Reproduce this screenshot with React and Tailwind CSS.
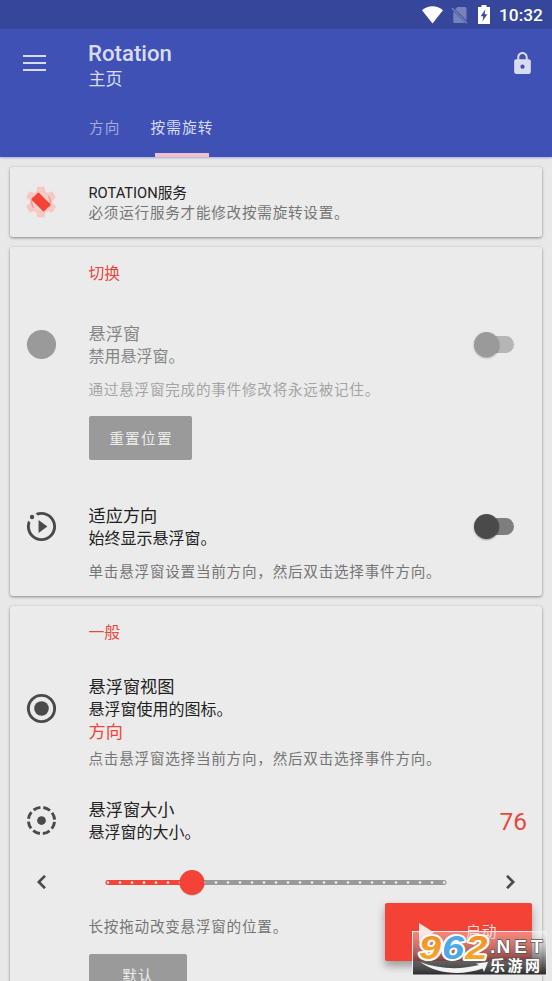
import React from "react";

const GEAR =
  "M19.14 12.94c.04-.3.06-.61.06-.94 0-.32-.02-.64-.07-.94l2.03-1.58c.18-.14.23-.41.12-.61l-1.92-3.32c-.12-.22-.37-.29-.59-.22l-2.39.96c-.5-.38-1.03-.7-1.62-.94l-.36-2.54c-.04-.24-.24-.41-.48-.41h-3.84c-.24 0-.43.17-.47.41l-.36 2.54c-.59.24-1.13.57-1.62.94l-2.39-.96c-.22-.08-.47 0-.59.22L2.74 8.87c-.12.21-.08.47.12.61l2.03 1.58c-.05.3-.09.63-.09.94s.02.64.07.94l-2.03 1.58c-.18.14-.23.41-.12.61l1.92 3.32c.12.22.37.29.59.22l2.39-.96c.5.38 1.03.7 1.62.94l.36 2.54c.05.24.24.41.48.41h3.84c.24 0 .44-.17.47-.41l.36-2.54c.59-.24 1.13-.56 1.62-.94l2.39.96c.22.08.47 0 .59-.22l1.92-3.32c.12-.22.07-.47-.12-.61l-2.01-1.58z";

function Line({ className = "", children }) {
  return <div className={"whitespace-nowrap " + className}>{children}</div>;
}
const Section = ({ children }) => (
  <Line className="h-6 pl-[78.5px] text-[15.8px] leading-6 text-[#e8483c]">{children}</Line>
);
const Title = ({ children }) => <Line className="h-[22px] text-[17.200px] leading-[22px]">{children}</Line>;
const Sub = ({ children }) => <Line className="h-[23px] text-[16px] leading-[23px]">{children}</Line>;
const Caption = ({ children }) => (
  <Line className="h-[22px] text-[14.6px] leading-[22px] tracking-[0.75px] text-[#757575]">{children}</Line>
);

function Card({ className = "", children }) {
  return (
    <section className={"mx-[10px] rounded-[3px] bg-[#ebebeb] shadow-[0_1px_3px_rgba(0,0,0,0.42)] " + className}>
      {children}
    </section>
  );
}

function IconCell({ className = "", children }) {
  return <div className={"flex w-[78.5px] shrink-0 pl-[14px] text-[#4a4a4a] " + className}>{children}</div>;
}

function Svg({ className = "size-[35px]", children }) {
  return (
    <svg viewBox="0 0 24 24" fill="currentColor" className={"block shrink-0 " + className}>
      {children}
    </svg>
  );
}

function Switch({ knob, track }) {
  return (
    <div className={"mr-[28px] flex h-[17px] w-[37px] items-center rounded-full " + track}>
      <div className={"-ml-[3px] size-[25px] shrink-0 rounded-full shadow-[0_1px_2px_rgba(0,0,0,0.35)] " + knob} />
    </div>
  );
}

function StatusBar() {
  return (
    <div className="flex h-[29px] items-center justify-end bg-[#36479b] pr-[10px] text-white">
      <svg viewBox="0 0 21 18" className="h-[18px] w-[21px]" fill="currentColor">
        <path d="M0 4.3C6-1.2 15-1.2 21 4.3L10.5 17.6Z" />
      </svg>
      <svg viewBox="0 0 17 18" className="ml-[8px] h-[18px] w-[17px] text-[#7782bb]">
        <path fill="currentColor" d="M6.5 1H14q1.5 0 1.5 1.500V14.500L4.200 3.200ZM2.300 5.300L14.300 17H3.800q-1.500 0-1.500-1.500Z" />
        <path stroke="currentColor" strokeWidth="1.300" d="M1 2L16 17.300" />
      </svg>
      <svg viewBox="0 0 12 19" className="ml-[10px] h-[19px] w-[12px]">
        <path fill="white" d="M3.500 0h5v2H12v17H0V2h3.500z" />
        <path fill="#36479b" d="M7.300 4.500L2.700 11.200H5.300L4.500 16.300L9.300 9.300H6.600Z" />
      </svg>
      <span className="ml-[9px] w-[43px] whitespace-nowrap text-[17.3px] font-medium leading-[30px]">10:32</span>
    </div>
  );
}

function Header() {
  return (
    <header className="relative z-10 h-[157px] bg-[#3f51b5] shadow-[0_1px_2px_rgba(63,81,181,0.4)]">
      <StatusBar />
      <div className="flex h-[128px] text-[#d9dcf0]">
        <div className="flex w-[88px] shrink-0 flex-col gap-[5px] pl-[23px] pt-[26px]">
          <i className="h-[2px] w-[23px] bg-[#d9dcf0]" />
          <i className="h-[2px] w-[23px] bg-[#d9dcf0]" />
          <i className="h-[2px] w-[23px] bg-[#d9dcf0]" />
        </div>
        <div className="flex flex-1 flex-col">
          <Line className="mt-[11px] h-[27px] text-[22.200px] font-medium leading-[27px]">Rotation</Line>
          <Line className="h-[24px] pl-[0.500px] text-[17px] leading-[25px]">主页</Line>
          <div className="mt-[22px] flex h-[44px] text-[14.700px] leading-[30px] tracking-[1.100px]">
            <span className="w-[62px] pl-px text-[#a4acdb]">方向</span>
            <div className="flex w-[66px] flex-col">
              <span className="h-[40px] whitespace-nowrap pl-[0.500px]">按需旋转</span>
              <i className="ml-[5px] h-[4px] w-[54px] bg-[#f1c0c8]" />
            </div>
          </div>
        </div>
        <Svg className="mr-[17px] mt-[22px] size-[25px]">
          <path d="M18 8h-1V6c0-2.760-2.240-5-5-5S7 3.240 7 6v2H6c-1.100 0-2 .9-2 2v10c0 1.100.9 2 2 2h12c1.100 0 2-.9 2-2V10c0-1.100-.9-2-2-2zm-6 9c-1.100 0-2-.9-2-2s.9-2 2-2 2 .9 2 2-.9 2-2 2zm3.100-9H8.900V6c0-1.710 1.390-3.100 3.100-3.100 1.710 0 3.100 1.390 3.100 3.100v2z" />
        </Svg>
      </div>
    </header>
  );
}

function Slider() {
  return (
    <svg viewBox="0 0 342 28" className="h-[28px] w-[342px]">
      <path d="M3 14.500H339" stroke="#999" strokeWidth="5" strokeLinecap="round" />
      <path d="M3 14.500H87" stroke="#f44336" strokeWidth="5" strokeLinecap="round" />
      {Array.from({ length: 29 }, (_, i) => (
        <circle key={i} cx={3 + i * 12} cy="14.500" r="1.300" fill="#f6eeee" />
      ))}
      <circle cx="87" cy="15" r="12.800" fill="#000" opacity="0.15" />
      <circle cx="87" cy="14.500" r="12.500" fill="#f44336" />
    </svg>
  );
}

function Watermark() {
  return (
    <svg viewBox="0 0 135 45" className="absolute left-[412px] top-[931px] h-[45px] w-[135px]">
      <defs>
        <linearGradient id="plate" x1="0" y1="0" x2="0" y2="1">
          <stop offset="0" stopColor="#fff" stopOpacity="0.35" />
          <stop offset="0.300" stopColor="#aaa" stopOpacity="0.45" />
          <stop offset="0.650" stopColor="#444" stopOpacity="0.650" />
          <stop offset="1" stopColor="#111" stopOpacity="0.900" />
        </linearGradient>
        <linearGradient id="amber" x1="0" y1="0" x2="0" y2="1">
          <stop offset="0" stopColor="#ef8a22" />
          <stop offset="1" stopColor="#fbab2c" />
        </linearGradient>
      </defs>
      <rect x="0.500" y="0.500" width="134" height="43.500" fill="url(#plate)" stroke="#eee" />
      <path d="M8 31C26 38 48 39 67 34L64 32.500L76 31L72 41L70.500 37.500C49 45 25 43 8 31Z" fill="#f3f3f3" />
      <g
        fontFamily="'Liberation Sans', Arial, sans-serif"
        fontWeight="700"
        stroke="#fff"
        strokeLinejoin="round"
        paintOrder="stroke"
      >
        <g fontSize="34" fontStyle="italic">
          <g strokeWidth="4">
            <text x="7" y="28" textLength="22" lengthAdjust="spacingAndGlyphs" fill="url(#amber)">9</text>
            <text x="30" y="28" textLength="22" lengthAdjust="spacingAndGlyphs" fill="#4ba9e8">6</text>
            <text x="53.500" y="28" textLength="22" lengthAdjust="spacingAndGlyphs" fill="url(#amber)">2</text>
          </g>
        </g>
        <g stroke="#555" strokeWidth="1.500" fill="#fff">
          <text x="78" y="22" fontSize="19">.</text>
          <text x="84.500" y="22" fontSize="19" textLength="46">NET</text>
        </g>
      </g>
      <text x="78" y="39.500" fontSize="15" fontWeight="700" textLength="50" fill="#fff" stroke="#555" strokeWidth="1" paintOrder="stroke" fontFamily="'Noto Sans CJK SC', sans-serif">乐游网</text>
    </svg>
  );
}

export default function App() {
  return (
    <main className="relative h-[981px] w-[552px] overflow-hidden bg-[#e8e8e8] font-[Roboto,'Noto_Sans_CJK_SC',sans-serif] text-[#212121]">
      <Header />
      <Card className="mt-[10px] flex h-[70px]">
        <IconCell className="pt-[16px]">
          <Svg className="-ml-[2px] size-[38px]">
            <path fill="#f6c8c4" d={GEAR} />
            <circle cx="12" cy="12" r="5.800" fill="#f3cfcc" />
            <circle cx="12" cy="12" r="5.900" fill="none" stroke="#ee9790" strokeWidth="0.900" strokeDasharray="7.500 11.035" strokeDashoffset="-14.500" />
            <rect x="8.800" y="6.500" width="6.400" height="11" rx="0.500" fill="#f44336" transform="rotate(-45 12 12)" />
          </Svg>
        </IconCell>
        <div className="pt-[15px]">
          <Line className="h-[20px] text-[14.700px] leading-[22px]">ROTATION服务</Line>
          <Caption>必须运行服务才能修改按需旋转设置。</Caption>
        </div>
      </Card>

      <Card className="mt-[10px] h-[349px] pt-[15px]">
        <Section>切换</Section>
        <div className="mt-[37px] flex text-[#858585]">
          <IconCell className="pt-[4px]">
            <Svg className="size-[35px] text-[#9a9a9a]"><circle cx="12" cy="12" r="10" /></Svg>
          </IconCell>
          <div className="flex-1">
            <Title>悬浮窗</Title>
            <Sub>禁用悬浮窗。</Sub>
            <div className="mt-[11px] opacity-60"><Caption>通过悬浮窗完成的事件修改将永远被记住。</Caption></div>
            <div className="ml-[0.500px] mt-[15px] flex h-[44px] w-[103px] items-center justify-center rounded-[2px] bg-[#9a9a9a] pl-px pt-[2px] text-[14.700px] tracking-[1.200px] text-[#ececec]">
              重置位置
            </div>
          </div>
          <div className="pt-[13px]"><Switch knob="bg-[#9a9a9a]" track="bg-[#b5b5b5]" /></div>
        </div>
        <div className="mt-[45px] flex">
          <IconCell className="pt-[4px]">
            <Svg>
              <path d="M2.880 7.880l1.540 1.540C4.150 10.230 4 11.100 4 12c0 4.410 3.590 8 8 8s8-3.590 8-8-3.590-8-8-8c-.9 0-1.770.15-2.580.42L7.890 2.890C9.150 2.320 10.540 2 12 2c5.520 0 10 4.480 10 10s-4.480 10-10 10S2 17.520 2 12c0-1.470.32-2.860.88-4.120zM7 5.500a1.500 1.500 0 1 0-3 0 1.500 1.500 0 0 0 3 0zM10 16.500l6-4.500-6-4.500z" />
            </Svg>
          </IconCell>
          <div className="flex-1">
            <Title>适应方向</Title>
            <Sub>始终显示悬浮窗。</Sub>
            <div className="mt-[11px]"><Caption>单击悬浮窗设置当前方向，然后双击选择事件方向。</Caption></div>
          </div>
          <div className="pt-[13px]"><Switch knob="bg-[#4a4a4a]" track="bg-[#7e7e7e]" /></div>
        </div>
      </Card>

      <Card className="mt-[10px] h-[400px] pt-[15px]">
        <Section>一般</Section>
        <div className="mt-[31px] flex">
          <IconCell className="pt-[15px]">
            <Svg>
              <circle cx="12" cy="12" r="9" fill="none" stroke="currentColor" strokeWidth="2" />
              <circle cx="12" cy="12" r="5" />
            </Svg>
          </IconCell>
          <div>
            <Title>悬浮窗视图</Title>
            <Sub>悬浮窗使用的图标。</Sub>
            <Line className="h-[23px] text-[17.200px] leading-[23px] text-[#f44336]">方向</Line>
            <div className="mt-[4px]"><Caption>点击悬浮窗选择当前方向，然后双击选择事件方向。</Caption></div>
          </div>
        </div>
        <div className="mt-[29px] flex">
          <IconCell className="pt-[4px]">
            <Svg>
              <circle cx="12" cy="12" r="9" fill="none" stroke="currentColor" strokeWidth="2" strokeDasharray="5 2.069" strokeDashoffset="-1.034" />
              <circle cx="12" cy="12" r="3" />
            </Svg>
          </IconCell>
          <div className="flex-1">
            <Title>悬浮窗大小</Title>
            <Sub>悬浮窗的大小。</Sub>
          </div>
          <div className="mr-[15px] pt-[7px] text-[24.500px] leading-[32px] text-[#e8483c]">76</div>
        </div>
        <div className="mt-[24px] flex h-[28px] items-center text-[#4a4a4a]">
          <svg viewBox="0 0 10 14" className="ml-[26px] h-[14px] w-[10px]" fill="none" stroke="currentColor" strokeWidth="2.600"><path d="M9 0.800L2.800 7L9 13.200" /></svg>
          <div className="ml-[59px] h-[28px] w-[342px]"><Slider /></div>
          <svg viewBox="0 0 10 14" className="ml-[59px] h-[14px] w-[10px]" fill="none" stroke="currentColor" strokeWidth="2.600"><path d="M1 0.800L7.200 7L1 13.200" /></svg>
        </div>
        <div className="mt-[20px] pl-[78.500px]">
          <Line className="h-[22px] text-[14.600px] leading-[23px] tracking-[0.750px] text-[#757575]">长按拖动改变悬浮窗的位置。</Line>
          <div className="ml-[0.500px] mt-[16px] flex h-[44px] w-[98px] items-center justify-center rounded-[2px] bg-[#9a9a9a] text-[14.700px] tracking-[1px] text-[#ececec]">默认</div>
        </div>
      </Card>

      <button className="absolute left-[385px] top-[903px] flex h-[58px] w-[147px] items-center rounded-[2px] bg-[#f44336] pl-[34px] text-[14.700px] tracking-[1px] text-[#ffd9d6] shadow-[0_5px_9px_rgba(0,0,0,0.35)]">
        <svg viewBox="0 0 15 19" className="h-[19px] w-[15px]" fill="#fbe3e1"><path d="M0 0L15 9.500L0 19Z" /></svg>
        <span className="ml-[32px]">启动</span>
      </button>
      <Watermark />
    </main>
  );
}
